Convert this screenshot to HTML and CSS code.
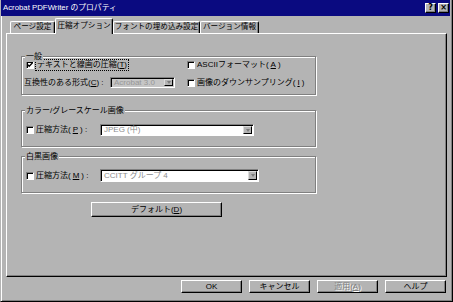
FILE: index.html
```html
<!DOCTYPE html>
<html lang="ja">
<head>
  <meta charset="UTF-8">
  <title>Acrobat PDFWriter のプロパティ</title>
  <link rel="stylesheet" href="styles.css">
</head>
<body>
<div class="window">
  <div class="titlebar">
    <span class="title">Acrobat PDFWriter のプロパティ</span>
    <div class="caption-btns">
      <span class="cap-btn">?</span>
      <span class="cap-btn">×</span>
    </div>
  </div>
  <div class="tabs">
    <span class="tab t1">ページ設定</span>
    <span class="tab t2 active">圧縮オプション</span>
    <span class="tab t3">フォントの埋め込み設定</span>
    <span class="tab t4">バージョン情報</span>
  </div>
  <div class="panel">
    <!-- 一般 -->
    <div class="group general">
      <span class="legend">一般</span>
      <div class="row row1">
        <div class="cell-left">
          <label class="check">
            <span class="box"><svg width="6" height="6" viewBox="0 0 6 6"><polyline points="0.5,2.5 2.2,4.3 5.6,0.6" fill="none" stroke="#000" stroke-width="1.3"/></svg></span>
            <span class="focus">テキストと線画の圧縮(<u>T</u>)</span>
          </label>
        </div>
        <label class="check"><span class="box"></span>ASCIIフォーマット(<u>A</u>)</label>
      </div>
      <div class="row row2">
        <div class="compat">
          <span class="compat-label">互換性のある形式(<u>C</u>) :</span>
          <span class="combo disabled c1"><span class="val">Acrobat 3.0</span><span class="arrow"></span></span>
        </div>
        <label class="check"><span class="box"></span>画像のダウンサンプリング(<u>I</u>)</label>
      </div>
    </div>

    <!-- カラー/グレースケール画像 -->
    <div class="group color">
      <span class="legend">カラー/グレースケール画像</span>
      <div class="row">
        <label class="check method"><span class="box"></span>圧縮方法(<u>P</u>) :</label>
        <span class="combo c2"><span class="val">JPEG (中)</span><span class="arrow"></span></span>
      </div>
    </div>

    <!-- 白黒画像 -->
    <div class="group mono">
      <span class="legend">白黒画像</span>
      <div class="row">
        <label class="check method"><span class="box"></span>圧縮方法(<u>M</u>) :</label>
        <span class="combo c3"><span class="val">CCITT グループ 4</span><span class="arrow"></span></span>
      </div>
    </div>

    <div class="btn default-btn">デフォルト(<u>D</u>)</div>
  </div>
  <div class="footer">
    <div class="btn">OK</div>
    <div class="btn">キャンセル</div>
    <div class="btn disabled">適用(<u>A</u>)</div>
    <div class="btn">ヘルプ</div>
  </div>
</div>
</body>
</html>
```

FILE: styles.css
```css
* { box-sizing: border-box; }
body {
  margin: 0;
  background: #b4b4b4;
  font-family: "Liberation Sans", "Noto Sans CJK JP", sans-serif;
  font-size: 8px;
  line-height: 10px;
  color: #000;
}
u { text-decoration-thickness: 1px; text-underline-offset: 1px; }

.window {
  width: 453px;
  height: 302px;
  border-left: 1px solid #b4b4b4;
  border-right: 1px solid #000;
  border-bottom: 1px solid #000;
  box-shadow: inset 1px 0 #fff, inset -1px -1px #808080;
  overflow: hidden;
}

/* タイトルバー */
.titlebar {
  height: 16px;
  margin-right: 2px;
  padding: 0 1px 0 2px;
  background: #0a0a80;
  color: #fff;
  display: flex;
  align-items: center;
  justify-content: space-between;
}
.title { font-size: 7.8px; }
.caption-btns { display: flex; gap: 2px; }
.cap-btn {
  width: 11px;
  height: 10px;
  background: #b4b4b4;
  border: 1px solid;
  border-color: #fff #000 #000 #fff;
  box-shadow: inset -1px -1px #808080;
  color: #000;
  font-family: "DejaVu Sans", sans-serif;
  font-weight: bold;
  font-size: 8px;
  line-height: 8px;
  text-align: center;
}

/* タブ */
.tabs {
  height: 17px;
  display: flex;
  align-items: flex-end;
  padding-left: 9px;
}
.tab {
  height: 12px;
  border: 1px solid;
  border-bottom: 0;
  border-color: #fff #000 #000 #fff;
  border-radius: 2px 2px 0 0;
  box-shadow: inset -1px 0 #808080;
  text-align: center;
  font-size: 7.6px;
  line-height: 10px;
  white-space: nowrap;
}
.tab.active {
  height: 16px;
  margin-bottom: -1px;
  padding-top: 2px;
  background: #b4b4b4;
  position: relative;
  z-index: 1;
}
.t1 { width: 45px; }
.t2 { width: 58px; }
.t3 { width: 87px; }
.t4 { width: 59px; }

.panel {
  margin-left: 5px;
  width: 441px;
  height: 244px;
  border: 1px solid;
  border-color: #fff #000 #000 #fff;
  box-shadow: inset -1px -1px #808080;
  padding: 22px 0 0 14px;
}

/* グループ枠 */
.group {
  position: relative;
  width: 295px;
  border: 1px solid #808080;
  box-shadow: inset 1px 1px #fff, 1px 1px #fff;
  padding-left: 4px;
}
.legend {
  position: absolute;
  top: -5px;
  left: 3px;
  padding: 0 1px;
  background: #b4b4b4;
  white-space: nowrap;
}
.general { height: 39px; padding-top: 3px; }
.color { height: 37px; padding-top: 13px; margin-top: 15px; }
.mono { height: 37px; padding-top: 12px; margin-top: 9px; }

.row { display: flex; align-items: center; }
.row1 { height: 10px; }
.row2 { height: 11px; margin-top: 7px; }
.cell-left { width: 161px; }

.check {
  display: flex;
  align-items: center;
  gap: 2px;
  white-space: nowrap;
}
.box {
  width: 8px;
  height: 8px;
  flex: none;
  background: #fff;
  border: 1px solid;
  border-color: #808080 #fff #fff #808080;
  box-shadow: inset 1px 1px #000;
  display: flex;
  align-items: center;
  justify-content: center;
}
.box svg { display: block; }
.focus { outline: 1px dotted #000; padding: 0 1px; }

.compat { width: 163px; margin-left: -2px; display: flex; align-items: center; }
.compat-label { width: 86px; white-space: nowrap; }
.method { width: 74px; }

/* コンボボックス */
.combo {
  display: flex;
  align-items: center;
  height: 12px;
  background: #fff;
  border: 1px solid;
  border-color: #808080 #fff #fff #808080;
  box-shadow: inset 1px 1px #000;
  padding: 1px 1px 1px 3px;
  color: #8c8c8c;
  white-space: nowrap;
}
.combo .val { flex: 1; }
.combo .arrow {
  width: 9px;
  height: 100%;
  background: #b4b4b4;
  border: 1px solid;
  border-color: #dcdcdc #000 #000 #dcdcdc;
  display: flex;
  align-items: center;
  justify-content: center;
}
.combo .arrow::after {
  content: "";
  border-top: 3px solid #7c7c7c;
  border-left: 2.5px solid transparent;
  border-right: 2.5px solid transparent;
}
.combo.disabled { background: #c6c6c6; color: #969696; }
.c1 { width: 65px; height: 11px; }
.c2 { width: 154px; }
.c3 { width: 159px; height: 13px; }

/* ボタン */
.btn {
  height: 15px;
  border: 1px solid;
  border-color: #fff #000 #000 #fff;
  box-shadow: inset -1px -1px #808080;
  display: flex;
  align-items: center;
  justify-content: center;
  white-space: nowrap;
}
.default-btn { width: 131px; margin: 9px 0 0 70px; }
.footer {
  display: flex;
  justify-content: flex-end;
  gap: 7px;
  margin: 3px 6px 0 0;
}
.footer .btn { width: 61px; height: 13px; }
.btn.disabled { color: #808080; text-shadow: 1px 1px #fff; }
```
